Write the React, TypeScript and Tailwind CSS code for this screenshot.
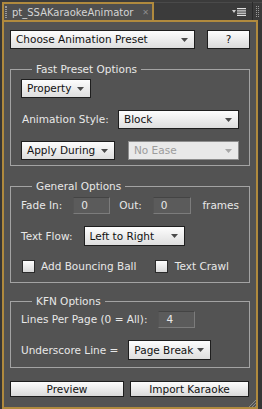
const Arrow = ({ disabled }: { disabled?: boolean }) => (
    <svg width="7" height="4" viewBox="0 0 7 4" className="shrink-0">
        <path d="M0 0h7L3.5 4z" fill={disabled ? "#a8a8a8" : "#4a4a4a"} />
    </svg>
);

const Select = ({
    label,
    className,
    disabled,
}: {
    label: string;
    className: string;
    disabled?: boolean;
}) => (
    <div
        className={
            "flex items-center justify-between pl-[5px] pr-[6px] border " +
            (disabled
                ? "border-[#8e8e8e] bg-[#e9e9e9] text-[#9c9c9c] "
                : "border-[#1e1e1e] bg-gradient-to-b from-[#fdfdfd] to-[#dedede] text-[#111] ") +
            className
        }
    >
        <span className="whitespace-nowrap">{label}</span>
        <Arrow disabled={disabled} />
    </div>
);

const Field = ({ value, className }: { value: string; className: string }) => (
    <div
        className={
            "flex items-center pl-[7px] h-[17px] bg-[#5b5b5b] border border-[#7c7c7c] border-t-[#444] border-l-[#555] text-[#e8e8e8] " +
            className
        }
    >
        {value}
    </div>
);

const Check = () => (
    <div className="w-[13px] h-[13px] border border-[#2a2a2a] bg-gradient-to-b from-[#fcfcfc] to-[#d8d8d8]" />
);

const Button = ({ label, className }: { label: string; className: string }) => (
    <div
        className={
            "flex items-center justify-center h-[16px] border border-[#1e1e1e] bg-gradient-to-b from-[#fdfdfd] to-[#dadada] text-[#111] " +
            className
        }
    >
        {label}
    </div>
);

const App = () => {
    return (
        <div className="w-[262px] h-[409px] bg-[#363636] flex flex-col text-[10.5px] leading-[13px] text-[#e8e8e8] font-['DejaVu_Sans',sans-serif] overflow-hidden">
            {/* tab bar */}
            <div className="h-[20px] flex shrink-0 bg-[#3b3b3b]">
                <div className="w-[2px]" />
                <div className="w-[152px] h-[18px] mt-[2px] flex items-center border-2 border-b-0 border-[#b08a3e] bg-[#4f4f4f]">
                    <div className="ml-[1px] w-[2px] h-[12px] border-l border-r border-dotted border-[#9a9a9a]" />
                    <span className="ml-[5px] text-[10px] text-[#d4d4d4]">pt_SSAKaraokeAnimator</span>
                    <span className="ml-auto mr-[3px] text-[8px] text-[#8c8c8c]">✕</span>
                </div>
                <div className="flex-1 flex items-center border-t border-[#4a4a4a] mt-[2px]">
                    <div className="ml-auto flex items-center mr-[6px]">
                        <svg width="4" height="3" viewBox="0 0 4 3">
                            <path d="M0 0h4L2 3z" fill="#cfcfcf" />
                        </svg>
                        <svg width="9" height="8" viewBox="0 0 9 8" className="ml-[1px]">
                            <rect y="0" width="9" height="1.2" fill="#e0e0e0" />
                            <rect y="2.3" width="9" height="1.2" fill="#e0e0e0" />
                            <rect y="4.6" width="9" height="1.2" fill="#e0e0e0" />
                            <rect y="6.8" width="9" height="1.2" fill="#e0e0e0" />
                        </svg>
                    </div>
                    <div className="w-[1px] h-[20px] bg-[#2a2a2a]" />
                    <div className="mx-[3px] w-[3px] h-[11px] border-l border-r border-dotted border-[#9a9a9a]" />
                </div>
            </div>

            {/* panel */}
            <div className="relative flex-1 ml-[2px] mr-[4px] border-2 border-[#b08a3e] bg-[#535353] pt-[8px]">
                <div className="flex items-center px-[6px]">
                    <Select label="Choose Animation Preset" className="w-[185px] h-[19px]" />
                    <Button label="?" className="ml-auto w-[43px] h-[19px]" />
                </div>

                <fieldset className="mx-[6px] mt-[13px] border border-[#a3a3a3] px-[10px] pt-[3px] pb-[5px]">
                    <legend className="ml-[11px] px-[4px] leading-[14px]">Fast Preset Options</legend>
                    <Select label="Property" className="w-[70px] h-[19px]" />
                    <div className="flex items-center mt-[12px]">
                        <span className="ml-[1px]">Animation Style:</span>
                        <Select label="Block" className="ml-auto w-[121px] h-[19px]" />
                    </div>
                    <div className="flex items-center mt-[12px]">
                        <Select label="Apply During" className="w-[94px] h-[19px]" />
                        <Select label="No Ease" disabled className="ml-auto w-[111px] h-[19px]" />
                    </div>
                </fieldset>

                <fieldset className="mx-[6px] mt-[13px] border border-[#a3a3a3] px-[10px] pt-[4px] pb-[9px]">
                    <legend className="ml-[11px] px-[4px] leading-[14px]">General Options</legend>
                    <div className="flex items-center">
                        <span>Fade In:</span>
                        <Field value="0" className="ml-[11px] w-[37px]" />
                        <span className="ml-[9px]">Out:</span>
                        <Field value="0" className="ml-[11px] w-[38px]" />
                        <span className="ml-auto">frames</span>
                    </div>
                    <div className="flex items-center mt-[12px]">
                        <span>Text Flow:</span>
                        <Select label="Left to Right" className="ml-[11px] w-[101px] h-[20px]" />
                    </div>
                    <div className="flex items-center mt-[14px]">
                        <div className="ml-[1px]">
                            <Check />
                        </div>
                        <span className="ml-[6px]">Add Bouncing Ball</span>
                        <div className="ml-auto">
                            <Check />
                        </div>
                        <span className="ml-[7px] mr-[10px]">Text Crawl</span>
                    </div>
                </fieldset>

                <fieldset className="mx-[6px] mt-[11px] border border-[#a3a3a3] px-[10px] pt-[3px] pb-[7px]">
                    <legend className="ml-[11px] px-[4px] leading-[14px]">KFN Options</legend>
                    <div className="flex items-center">
                        <span>Lines Per Page (0 = All):</span>
                        <Field value="4" className="ml-[11px] w-[37px]" />
                    </div>
                    <div className="flex items-center mt-[12px]">
                        <span>Underscore Line =</span>
                        <Select label="Page Break" className="ml-[10px] w-[83px] h-[20px]" />
                    </div>
                </fieldset>

                <div className="flex items-center mt-[13px] px-[6px] gap-[6px]">
                    <Button label="Preview" className="w-[114px]" />
                    <Button label="Import Karaoke" className="w-[119px]" />
                </div>

                <svg width="8" height="8" viewBox="0 0 8 8" className="absolute right-0 bottom-0">
                    <path d="M8 1L1 8M8 4L4 8M8 7L7 8" stroke="#8a8a8a" strokeWidth="1" />
                </svg>
            </div>
        </div>
    );
};

export default App;
